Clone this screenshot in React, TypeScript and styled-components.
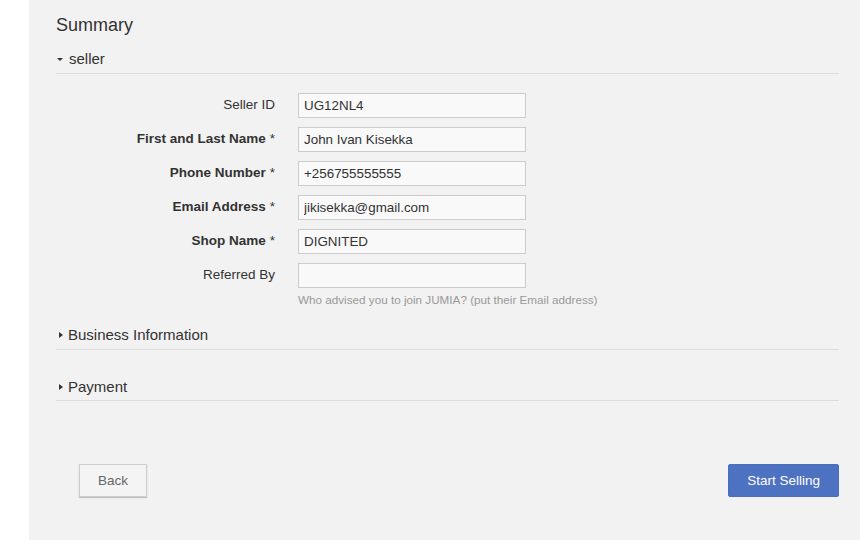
import React from 'react';
import styled, {createGlobalStyle} from 'styled-components';

const GlobalStyle = createGlobalStyle`
  html, body {
    margin: 0;
    padding: 0;
    background: #fff;
  }
  body {
    font-family: 'Liberation Sans', Arial, sans-serif;
    color: #333;
  }
`;

const Panel = styled.main`
  margin-left: 29px;
  height: 540px;
  box-sizing: border-box;
  padding: 15px 21px 0 27px;
  background: #f2f2f2;
`;

const Title = styled.h1`
  margin: 0;
  font-size: 18px;
  line-height: 20px;
  font-weight: normal;
  color: #333;
`;

const SectionHeader = styled.div<{gap: number; pad?: number}>`
  display: flex;
  align-items: center;
  margin-top: ${p => p.gap}px;
  padding-bottom: ${p => p.pad ?? 5}px;
  border-bottom: 1px solid #dcdcdc;
  font-size: 15px;
  line-height: 20px;
  color: #333;
`;

const Caret = styled.span<{open?: boolean}>`
  display: inline-block;
  width: 0;
  height: 0;
  ${p =>
    p.open
      ? `border-left: 3px solid transparent;
         border-right: 3px solid transparent;
         border-top: 3px solid #333;
         margin: 1px 6px 0 1px;`
      : `border-top: 3px solid transparent;
         border-bottom: 3px solid transparent;
         border-left: 4px solid #333;
         margin: 0 5px 0 3px;`}
`;

const Form = styled.div`
  display: grid;
  grid-template-columns: 219px 228px;
  column-gap: 23px;
  row-gap: 9px;
  margin-top: 19px;
`;

const Label = styled.label<{required?: boolean}>`
  display: flex;
  align-items: center;
  justify-content: flex-end;
  height: 23px;
  font-size: 13.5px;
  font-weight: ${p => (p.required ? 'bold' : 'normal')};
  color: #333;
  white-space: nowrap;
`;

const Star = styled.span`
  font-weight: normal;
  margin-left: 4px;
`;

const Input = styled.input`
  box-sizing: border-box;
  width: 228px;
  height: 25px;
  margin: 0;
  padding: 0 5px;
  border: 1px solid #cccccc;
  background: #f9f9f9;
  font-family: 'Liberation Sans', Arial, sans-serif;
  font-size: 13.4px;
  color: #333;
  outline: none;
`;

const Help = styled.div`
  grid-column: 2 / span 1;
  margin-top: -4px;
  font-size: 11.7px;
  line-height: 14px;
  color: #999;
  white-space: nowrap;
`;

const Footer = styled.div`
  display: flex;
  justify-content: space-between;
  align-items: center;
  margin-top: 63px;
  padding-left: 23px;
`;

const Button = styled.button<{primary?: boolean}>`
  height: 33px;
  padding: 0 18px;
  border: 1px solid ${p => (p.primary ? '#4a6fbf' : '#cccccc')};
  border-radius: ${p => (p.primary ? '2px' : '0')};
  background: ${p => (p.primary ? '#4e72c2' : '#f4f4f4')};
  box-shadow: ${p => (p.primary ? 'none' : '0 1px 1px rgba(0,0,0,0.2)')};
  color: ${p => (p.primary ? '#fff' : '#666')};
  font-family: 'Liberation Sans', Arial, sans-serif;
  font-size: 13.5px;
  cursor: pointer;
`;

const fields = [
  {label: 'Seller ID', value: 'UG12NL4'},
  {label: 'First and Last Name', value: 'John Ivan Kisekka', required: true},
  {label: 'Phone Number', value: '+256755555555', required: true},
  {label: 'Email Address', value: 'jikisekka@gmail.com', required: true},
  {label: 'Shop Name', value: 'DIGNITED', required: true},
  {label: 'Referred By', value: ''},
];

export default function App() {
  return (
    <>
      <GlobalStyle />
      <Panel>
        <Title>Summary</Title>
        <SectionHeader gap={14} pad={4}>
          <Caret open />
          seller
        </SectionHeader>
        <Form>
          {fields.map(f => (
            <React.Fragment key={f.label}>
              <Label required={f.required}>
                {f.label}
                {f.required && <Star>*</Star>}
              </Label>
              <Input defaultValue={f.value} />
            </React.Fragment>
          ))}
          <span />
          <Help>Who advised you to join JUMIA? (put their Email address)</Help>
        </Form>
        <SectionHeader gap={18} pad={4}>
          <Caret />
          Business Information
        </SectionHeader>
        <SectionHeader gap={27} pad={3}>
          <Caret />
          Payment
        </SectionHeader>
        <Footer>
          <Button>Back</Button>
          <Button primary>Start Selling</Button>
        </Footer>
      </Panel>
    </>
  );
}
